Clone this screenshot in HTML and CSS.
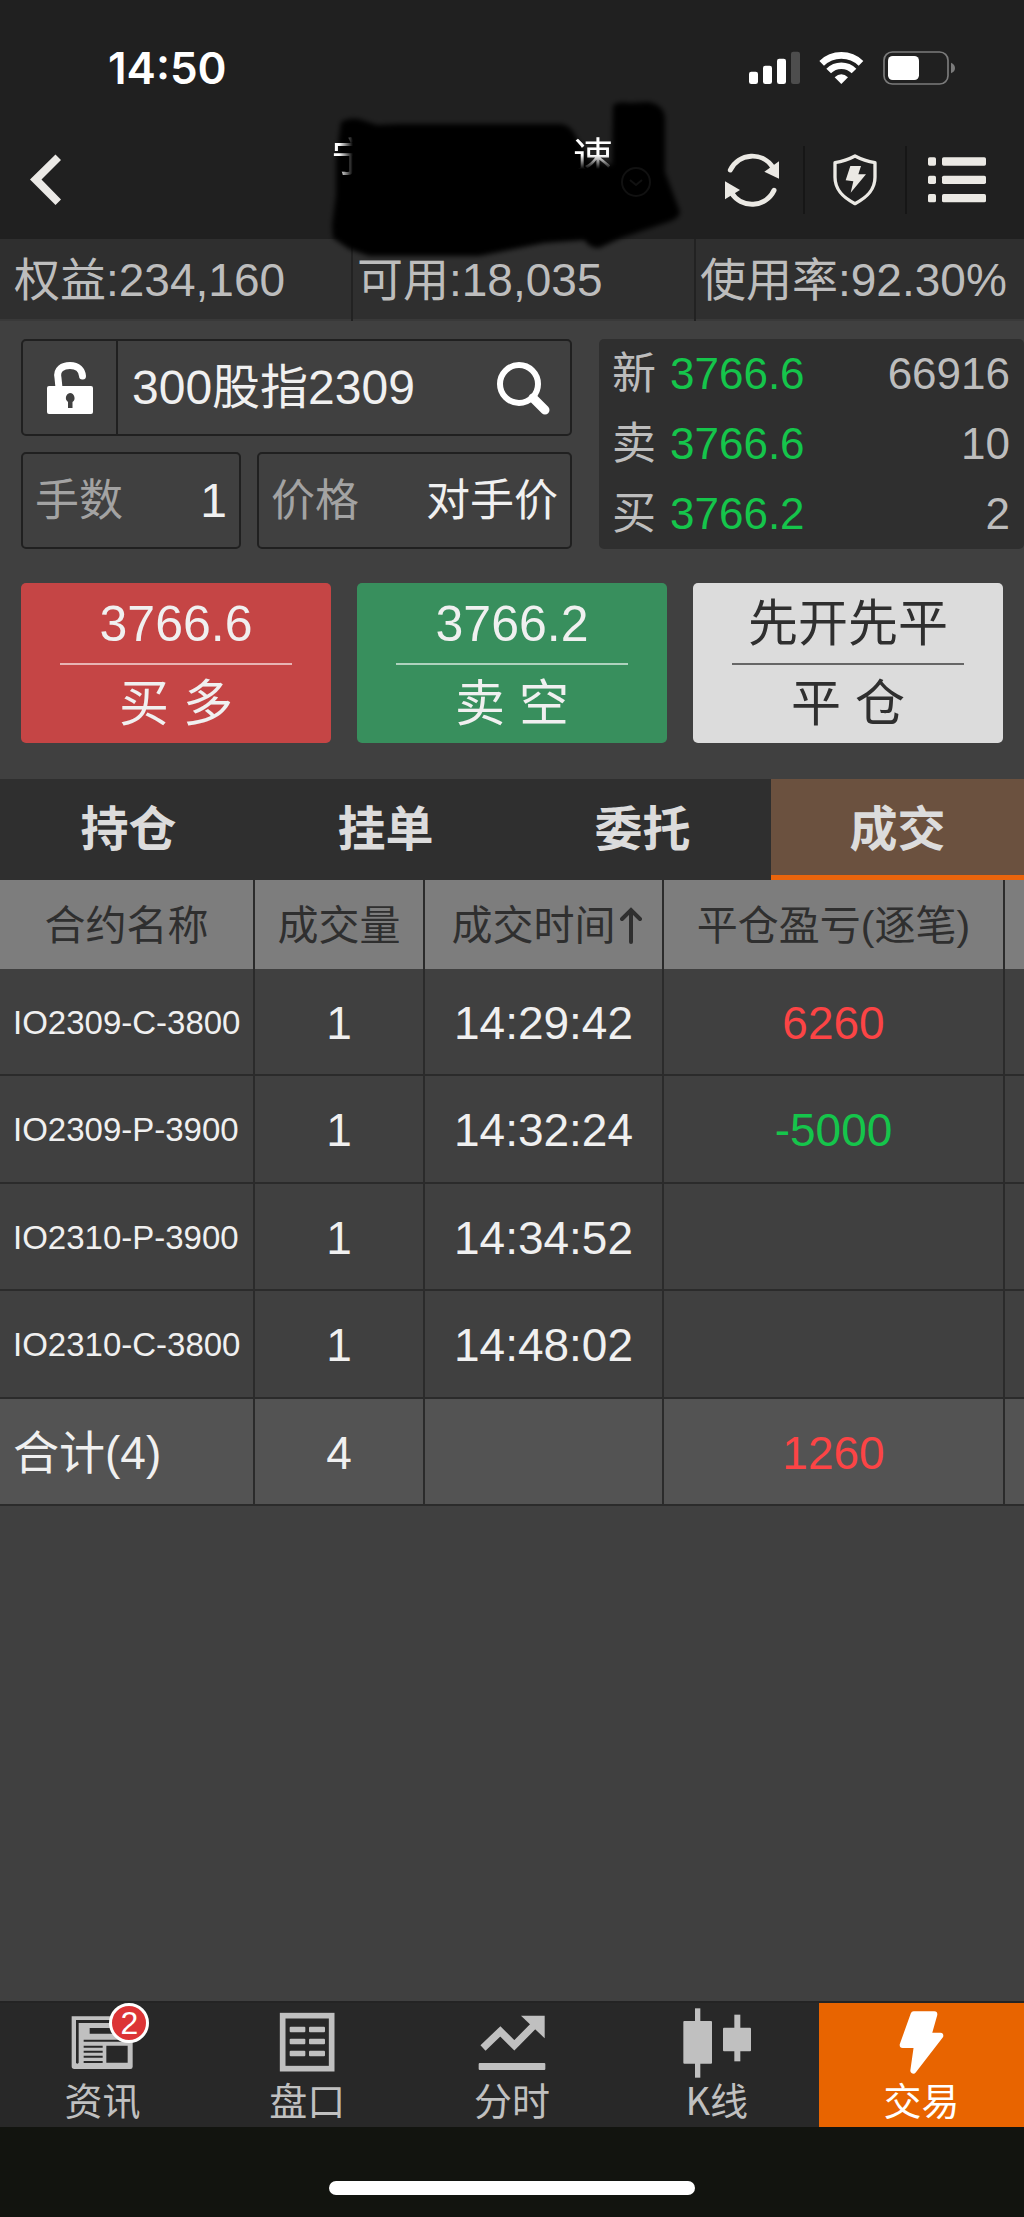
FILE: index.html
```
<!DOCTYPE html>
<html lang="zh-CN">
<head>
    <meta charset="UTF-8">
    <meta name="viewport" content="width=device-width, initial-scale=1.0">
    <title>交易</title>
    <link rel="stylesheet" href="styles.css">
</head>
<body>
    <header class="top">
        <div class="status-bar">
            <span class="clock">14:50</span>
            <div class="status-icons">
                <svg width="51" height="34" viewBox="711 153 153 102" fill="#fff">
                    <rect x="711" y="215" width="27" height="37" rx="7"/>
                    <rect x="753" y="197" width="27" height="55" rx="7"/>
                    <rect x="795" y="176" width="27" height="76" rx="7"/>
                    <rect x="837" y="155" width="27" height="97" rx="7" fill="#4d4d4d"/>
                </svg>
                <svg width="45" height="34" viewBox="921 153 135 102" fill="none" stroke="#fff" stroke-width="20">
                    <path d="M929 190A85 85 0 0 1 1047 190"/>
                    <path d="M950 213A54 54 0 0 1 1026 213"/>
                    <path d="M988 252L968 232Q988 213 1008 232Z" fill="#fff" stroke="none"/>
                </svg>
                <svg width="72" height="34" viewBox="1113 153 216 102">
                    <rect x="1116" y="156" width="192" height="96" rx="25" fill="none" stroke="#7b7b7b" stroke-width="5"/>
                    <rect x="1128" y="168" width="93" height="72" rx="14" fill="#fff"/>
                    <path d="M1317 188Q1329 193 1329 204T1317 220Z" fill="#7b7b7b"/>
                </svg>
            </div>
        </div>
        <nav class="title-bar">
            <button class="back" aria-label="返回">
                <svg width="31" height="52" viewBox="30 156 31 52" fill="#ebe9e6">
                    <path d="M30 181.500L55.500 156.500L61 162L41.500 181.500L61 201.500L55.500 207Z"/>
                </svg>
            </button>
            <div class="broker">
                <svg class="smudge" width="350" height="160" viewBox="332 99 350 160">
                    <defs>
                        <filter id="soft" x="-10%" y="-10%" width="120%" height="120%">
                            <feGaussianBlur stdDeviation="2.500"/>
                        </filter>
                    </defs>
                    <path filter="url(#soft)" d="M342 122Q350 117 360 119L378 125L400 124H562Q573 126 577 137L590 160L613 165L614 105Q620 101 630 103L650 102Q665 105 666 118V172L681 212Q680 218 672 221L622 238L600 248Q592 249 585 240L545 243L510 250L480 256H370L350 249L334 238L333 225L337 195V160Z"/>
                    <circle cx="637" cy="182" r="14" fill="none" stroke="#111" stroke-width="2"/>
                    <path d="M631 180L637 185L643 180" fill="none" stroke="#111" stroke-width="2"/>
                </svg>
                <span class="broker-first">宁</span>
                <span class="broker-last">速</span>
            </div>
            <div class="actions">
                <button aria-label="刷新">
                    <svg width="56" height="56" viewBox="639 453 168 168" fill="#ebe9e4">
                        <path d="M658 507A73 73 0 0 1 786 500M789 568A73 73 0 0 1 661 575" fill="none" stroke="#ebe9e4" stroke-width="15" stroke-linecap="round"/>
                        <path d="M804 481V533L760 512Z"/>
                        <path d="M642 541V595L687 567Z"/>
                    </svg>
                </button>
                <button aria-label="安全">
                    <svg width="44" height="54" viewBox="967 455 132 162" fill="#ebe9e4">
                        <path d="M1033 464Q1061 479 1093 484V528C1093 568 1066 590 1033 607C1000 590 973 568 973 528V484Q1005 479 1033 464Z" fill="none" stroke="#ebe9e4" stroke-width="10" stroke-linejoin="round"/>
                        <path d="M1019 494H1051L1043 519H1066L1020 574L1028 540L1005 537Z"/>
                    </svg>
                </button>
                <button aria-label="菜单">
                    <svg width="58" height="46" viewBox="1252 469 174 138" fill="#ebe9e4">
                        <rect x="1252" y="470" width="24" height="25" rx="5"/>
                        <rect x="1294" y="470" width="132" height="25" rx="5"/>
                        <rect x="1252" y="525" width="24" height="25" rx="5"/>
                        <rect x="1294" y="525" width="132" height="25" rx="5"/>
                        <rect x="1252" y="580" width="24" height="25" rx="5"/>
                        <rect x="1294" y="580" width="132" height="25" rx="5"/>
                    </svg>
                </button>
            </div>
        </nav>
    </header>

    <section class="account">
        <div>权益:234,160</div>
        <div>可用:18,035</div>
        <div>使用率:92.30%</div>
    </section>

    <main>
        <section class="order">
            <form class="order-form">
                <div class="field symbol">
                    <button type="button" class="lock" aria-label="锁定合约">
                        <svg width="46" height="54" viewBox="46 360 46 54">
                            <path d="M58 387L57 377C55 368 62 364.500 69 364.500C77 364.500 81 369 81.500 375" fill="none" stroke="#fff" stroke-width="7" stroke-linecap="round"/>
                            <rect x="46" y="385" width="46" height="28" rx="2" fill="#fff"/>
                            <path d="M69 392A5 5 0 0 1 71.500 401V407H67V401A5 5 0 0 1 69 392Z" fill="#404040"/>
                        </svg>
                    </button>
                    <input type="text" value="300股指2309" aria-label="合约">
                    <button type="button" class="search" aria-label="搜索">
                        <svg width="54" height="54" viewBox="496 360 54 54" fill="none" stroke="#fff">
                            <circle cx="519" cy="383" r="19" stroke-width="6"/>
                            <path d="M533 397L545 409" stroke-width="9" stroke-linecap="round"/>
                        </svg>
                    </button>
                </div>
                <div class="field lots">
                    <label for="lots">手数</label>
                    <input id="lots" type="text" value="1">
                </div>
                <div class="field price">
                    <label for="price">价格</label>
                    <select id="price">
                        <option>对手价</option>
                    </select>
                </div>
            </form>
            <div class="quote">
                <div class="quote-row"><span>新</span><span class="green">3766.6</span><span class="vol">66916</span></div>
                <div class="quote-row"><span>卖</span><span class="green">3766.6</span><span class="vol">10</span></div>
                <div class="quote-row"><span>买</span><span class="green">3766.2</span><span class="vol">2</span></div>
            </div>
        </section>

        <section class="trade-buttons">
            <button class="buy"><span>3766.6</span><span>买 多</span></button>
            <button class="sell"><span>3766.2</span><span>卖 空</span></button>
            <button class="close"><span>先开先平</span><span>平 仓</span></button>
        </section>

        <nav class="tabs">
            <a href="#position">持仓</a>
            <a href="#pending">挂单</a>
            <a href="#orders">委托</a>
            <a href="#deals" class="active">成交</a>
        </nav>

        <table class="deals">
            <colgroup>
                <col class="col-name">
                <col class="col-qty">
                <col class="col-time">
                <col class="col-profit">
                <col>
            </colgroup>
            <thead>
                <tr>
                    <th>合约名称</th>
                    <th>成交量</th>
                    <th>
                        <span class="sorted">成交时间<svg width="22" height="38" viewBox="0 0 22 38" fill="none" stroke="#2f2f2f" stroke-width="4" stroke-linecap="round"><path d="M11 35V3M2 12L11 3L20 12"/></svg></span>
                    </th>
                    <th>平仓盈亏(逐笔)</th>
                    <th></th>
                </tr>
            </thead>
            <tbody>
                <tr><td>IO2309-C-3800</td><td>1</td><td>14:29:42</td><td class="red">6260</td><td></td></tr>
                <tr><td>IO2309-P-3900</td><td>1</td><td>14:32:24</td><td class="green">-5000</td><td></td></tr>
                <tr><td>IO2310-P-3900</td><td>1</td><td>14:34:52</td><td></td><td></td></tr>
                <tr><td>IO2310-C-3800</td><td>1</td><td>14:48:02</td><td></td><td></td></tr>
            </tbody>
            <tfoot>
                <tr><td>合计(4)</td><td>4</td><td></td><td class="red">1260</td><td></td></tr>
            </tfoot>
        </table>
    </main>

    <footer>
        <nav class="bottom-nav">
            <a href="#news">
                <span class="icon">
                    <svg width="78" height="70" viewBox="190 82 234 210" fill="#c0c0c0">
                        <path fill-rule="evenodd" d="M216 107H385V118H229V246Q233 252 237 246V127H399V258Q399 265 392 265H224Q216 265 216 257ZM270 142V159H385V142ZM252 177V183H385V177ZM252 195V201H309V195ZM252 210V216H309V210ZM252 225V231H309V225ZM252 241V247H309V241ZM320 195V246H384V195Z"/>
                    </svg>
                    <span class="badge">2</span>
                </span>
                资讯
            </a>
            <a href="#depth">
                <svg width="78" height="70" viewBox="804 82 234 210" fill="#c0c0c0">
                    <rect x="848" y="105" width="147" height="159" fill="none" stroke="#c0c0c0" stroke-width="17"/>
                    <rect x="869" y="138" width="47" height="17" rx="3"/>
                    <rect x="927" y="138" width="48" height="17" rx="3"/>
                    <rect x="869" y="174" width="47" height="17" rx="3"/>
                    <rect x="927" y="174" width="48" height="17" rx="3"/>
                    <rect x="869" y="210" width="47" height="17" rx="3"/>
                    <rect x="927" y="210" width="48" height="17" rx="3"/>
                </svg>
                盘口
            </a>
            <a href="#minute">
                <svg width="78" height="70" viewBox="-117 82 234 210" fill="#c0c0c0">
                    <path d="M-87 202L-35 152L7 194L70 130" fill="none" stroke="#c0c0c0" stroke-width="22"/>
                    <path d="M27 105H98V173Z"/>
                    <rect x="-100" y="247" width="200" height="21" rx="3"/>
                </svg>
                分时
            </a>
            <a href="#kline">
                <svg width="78" height="70" viewBox="498 82 234 210" fill="#c0c0c0">
                    <rect x="549" y="83" width="16" height="208"/>
                    <rect x="514" y="121" width="86" height="128" rx="3"/>
                    <rect x="667" y="102" width="18" height="140"/>
                    <rect x="633" y="141" width="84" height="71" rx="3"/>
                </svg>
                K线
            </a>
            <a href="#trade" class="active">
                <svg width="78" height="70" viewBox="1113 82 234 210">
                    <path d="M1205 101H1267L1249 165H1285L1204 270L1215 193H1172Z" fill="#fff" stroke="#fff" stroke-width="18" stroke-linejoin="round"/>
                </svg>
                交易
            </a>
        </nav>
        <div class="home"><div class="home-bar"></div></div>
    </footer>
</body>
</html>
```
FILE: styles.css
```
* {
    box-sizing: border-box;
}

body {
    margin: 0;
    min-height: 100vh;
    display: flex;
    flex-direction: column;
    background: #404040;
    color: #f0f0f0;
    font-family: "Liberation Sans", "Noto Sans CJK SC", sans-serif;
    font-size: 46px;
    line-height: 56px;
}

button, input, select {
    font: inherit;
    color: inherit;
    background: none;
    border: none;
    border-radius: 0;
    margin: 0;
    padding: 0;
    min-width: 0;
    appearance: none;
    outline: none;
}

button {
    cursor: pointer;
}

a {
    color: inherit;
    text-decoration: none;
}

svg {
    display: block;
    flex-shrink: 0;
}

main {
    flex: 1;
}

.green {
    color: #15c54b;
}

.red {
    color: #fc4445;
}

/* header */
.top {
    background: #202020;
}

.status-bar {
    height: 120px;
    padding: 16px 69px 0 108px;
    display: flex;
    align-items: center;
    justify-content: space-between;
}

.clock {
    font-family: Inter, sans-serif;
    font-size: 44px;
    font-weight: 600;
    color: #fff;
}

.status-icons {
    display: flex;
    gap: 19px;
}

.title-bar {
    height: 119px;
    padding: 0 17px 0 30px;
    display: flex;
    align-items: center;
}

.back {
    margin-right: auto;
}

.broker {
    position: relative;
    align-self: stretch;
    width: 350px;
    margin-right: 20px;
    padding: 17px 68px 0 0;
    display: flex;
    justify-content: space-between;
    font-size: 40px;
    line-height: 40px;
    color: #fff;
}

.smudge {
    position: absolute;
    left: 0;
    top: -21px;
    z-index: 1;
    overflow: visible;
}

.broker-first, .broker-last {
    position: relative;
    z-index: 2;
}

.broker-first {
    height: 40px;
    mask-image: linear-gradient(to right, #000 20%, transparent 55%);
}

.broker-last {
    height: 40px;
    mask-image: linear-gradient(to bottom, #000 45%, transparent 80%);
}

.actions {
    display: flex;
}

.actions button {
    width: 102px;
    height: 68px;
    display: flex;
    align-items: center;
    justify-content: center;
}

.actions button + button {
    border-left: 2px solid #161616;
}

/* account strip */
.account {
    height: 82px;
    display: grid;
    grid-template-columns: 351px 343px 1fr;
    background: #2f2f2f;
    border-bottom: 2px solid #393939;
    color: #bdbdbd;
    line-height: 82px;
    white-space: nowrap;
}

.account div {
    padding-left: 14px;
}

.account div + div {
    padding-left: 4px;
    border-left: 2px solid #222;
}

/* order form */
.order {
    padding: 18px 0 34px 21px;
    display: grid;
    grid-template-columns: 551px 1fr;
    gap: 27px;
}

.order-form {
    display: grid;
    grid-template-columns: 220px 1fr;
    gap: 16px;
}

.field {
    height: 97px;
    display: flex;
    align-items: center;
    border: 2px solid #202020;
    border-radius: 5px;
    font-size: 44px;
}

.field label {
    flex-shrink: 0;
    color: #a3a3a3;
}

.field input,
.field select {
    flex: 1;
    align-self: stretch;
    width: 0;
}

.symbol {
    grid-column: 1 / 3;
    font-size: 48px;
}

.lock {
    align-self: stretch;
    width: 95px;
    display: flex;
    align-items: center;
    justify-content: center;
    border-right: 2px solid #202020;
}

.symbol input {
    padding-left: 14px;
}

.search {
    padding: 0 20px;
}

.lots,
.price {
    padding: 0 12px;
}

.lots input {
    font-size: 48px;
    text-align: right;
}

.price select {
    text-align-last: right;
}

.quote {
    padding: 0 14px 0 13px;
    background: #2f2f2f;
    border-radius: 5px;
    color: #bdbdbd;
    font-size: 44px;
    line-height: 70px;
}

.quote-row {
    display: flex;
    gap: 14px;
}

.vol {
    margin-left: auto;
}

/* buy / sell / close */
.trade-buttons {
    padding: 0 21px 36px;
    display: grid;
    grid-template-columns: repeat(3, 1fr);
    gap: 26px;
}

.trade-buttons button {
    height: 160px;
    padding: 2px 39px 0;
    border-radius: 5px;
    font-size: 50px;
    line-height: 78px;
}

.trade-buttons span {
    display: block;
    white-space: nowrap;
}

.trade-buttons span + span {
    border-top: 2px solid currentColor;
    border-color: rgba(255, 255, 255, 0.6);
}

.buy {
    background: #c54545;
}

.sell {
    background: #388f5d;
}

.close {
    background: #dcdcdc;
    color: #2f2f2f;
}

.close span + span {
    border-color: #666;
}

/* tabs */
.tabs {
    display: grid;
    grid-template-columns: repeat(3, 257px) 1fr;
    background: #2f2f2f;
    color: #dcdcdc;
    font-size: 48px;
    font-weight: 700;
    text-align: center;
    line-height: 101px;
}

.tabs .active {
    background: #6b513f;
    box-shadow: inset 0 -5px #ea640c;
}

/* deals table */
.deals {
    width: 100%;
    table-layout: fixed;
    border-collapse: separate;
    border-spacing: 0;
    text-align: center;
    white-space: nowrap;
}

.col-name {
    width: 255px;
}

.col-qty {
    width: 170px;
}

.col-time {
    width: 239px;
}

.col-profit {
    width: 341px;
}

.deals th,
.deals td {
    padding: 2px 0 0;
    border-right: 2px solid #2b2b2b;
}

.deals th:last-child,
.deals td:last-child {
    border-right: none;
}

.deals th {
    height: 89px;
    background: #7d7d7d;
    color: #2f2f2f;
    font-size: 41px;
    font-weight: 400;
}

.sorted {
    display: flex;
    align-items: center;
    justify-content: center;
    gap: 4px;
    padding-left: 6px;
}

.deals td {
    height: 107px;
    border-bottom: 2px solid #2b2b2b;
}

.deals tr:nth-child(even) td {
    height: 108px;
}

.deals td:first-child {
    padding-left: 13px;
    text-align: left;
}

.deals tbody td:first-child {
    font-size: 33px;
}

.deals tfoot td {
    background: #535353;
}

/* bottom nav */
.bottom-nav {
    display: grid;
    grid-template-columns: repeat(5, 1fr);
    background: #282828;
    border-top: 2px solid #242424;
    color: #c0c0c0;
    font-family: "Noto Sans CJK SC", sans-serif;
    font-size: 38px;
    line-height: 42px;
}

.bottom-nav a {
    height: 124px;
    padding-top: 5px;
    display: flex;
    flex-direction: column;
    align-items: center;
}

.bottom-nav .active {
    background: #e86400;
    color: #fff;
}

.icon {
    position: relative;
}

.badge {
    position: absolute;
    left: 46px;
    top: -5px;
    width: 40px;
    height: 40px;
    background: #dc3436;
    border: 3px solid #fff;
    border-radius: 50%;
    color: #fff;
    font-family: "Liberation Sans", sans-serif;
    font-size: 32px;
    line-height: 35px;
    text-align: center;
}

.home {
    height: 90px;
    padding-top: 54px;
    background: #12140f;
}

.home-bar {
    width: 366px;
    height: 14px;
    margin: 0 auto;
    background: #fff;
    border-radius: 7px;
}
```
